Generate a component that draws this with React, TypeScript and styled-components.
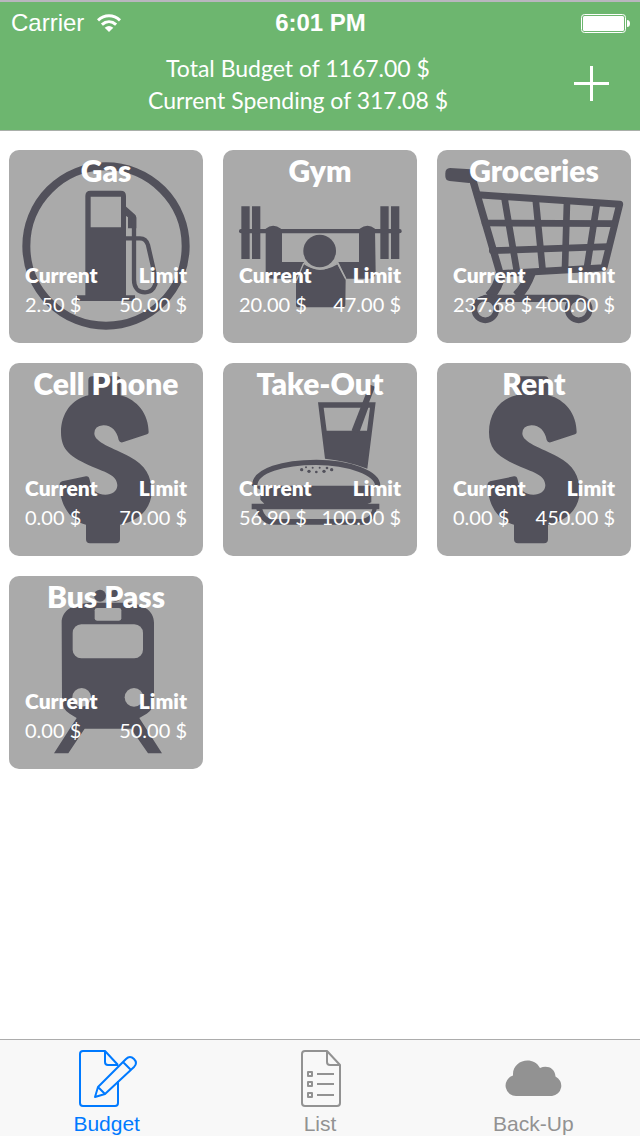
import React from "react";
import styled, { createGlobalStyle } from "styled-components";

const GlobalStyle = createGlobalStyle`
  *, *::before, *::after { box-sizing: border-box; }
  body { margin: 0; background: #fff; }
  button { font: inherit; color: inherit; background: none; border: 0; padding: 0; cursor: pointer; }
`;

const Screen = styled.div`
  display: flex;
  flex-direction: column;
  min-height: 100vh;
  font-family: Lato, "Liberation Sans", sans-serif;
`;

const Header = styled.header`
  background: #6db66f;
  color: #fff;
  border-top: 2px solid #b9b6bf;
  border-bottom: 1px solid #a9afa9;
  padding-bottom: 14px;
`;

const StatusBar = styled.div`
  display: grid;
  grid-template-columns: 1fr auto 1fr;
  align-items: center;
  height: 42px;
  padding: 0 10px 0 11px;
  font: 24px/42px "Liberation Sans", Arial, sans-serif;
`;

const Carrier = styled.span`
  display: flex;
  align-items: center;
  gap: 13px;
`;

const Clock = styled.time`
  font-weight: 700;
`;

const Battery = styled.svg`
  justify-self: end;
`;

const Summary = styled.div`
  display: flex;
  align-items: center;
  padding: 8px 26px 0;
`;

const Totals = styled.div`
  flex: 1;
  text-align: center;
  font-size: 23px;
  font-weight: 400;
  line-height: 32px;
  p { margin: 0; }
`;

const AddButton = styled.button`
  display: grid;
  place-items: center;
  width: 44px;
  height: 44px;
`;

const Grid = styled.ul`
  flex: 1;
  display: grid;
  grid-template-columns: repeat(3, 1fr);
  align-content: start;
  gap: 20px;
  list-style: none;
  margin: 0;
  padding: 19px 9px;
`;

const Tile = styled.li`
  position: relative;
  display: flex;
  flex-direction: column;
  justify-content: space-between;
  aspect-ratio: 194 / 193;
  padding: 0 16px 24px;
  border-radius: 10px;
  background: #aaa;
  color: #fff;
  overflow: hidden;
`;

const TileArt = styled.svg`
  position: absolute;
  inset: 0;
  width: 100%;
  height: 100%;
  color: #52515b;
`;

const TileTitle = styled.h2`
  position: relative;
  margin: 0;
  text-align: center;
  font-size: 30px;
  font-weight: 800;
  line-height: 40px;
  white-space: nowrap;
`;

const Amounts = styled.dl`
  position: relative;
  display: flex;
  justify-content: space-between;
  margin: 0;
  white-space: nowrap;
`;

const Amount = styled.div<{ $end?: boolean }>`
  text-align: ${(p) => (p.$end ? "right" : "left")};
  dt { font-size: 21px; font-weight: 800; line-height: 28px; }
  dd { margin: 0; font-size: 20px; line-height: 30px; }
`;

const TabBar = styled.nav`
  position: sticky;
  bottom: 0;
  display: grid;
  grid-template-columns: repeat(3, 1fr);
  background: #f8f8f8;
  border-top: 1px solid #acacac;
`;

const Tab = styled.a<{ $active?: boolean }>`
  display: flex;
  flex-direction: column;
  align-items: center;
  padding-top: 8px;
  color: ${(p) => (p.$active ? "#007aff" : "#929292")};
  font: 21px/24px "Liberation Sans", Arial, sans-serif;
  text-decoration: none;
  svg { margin-bottom: 4px; }
`;

const GasArt = () => (
  <TileArt viewBox="27 30 582 579" fill="none" stroke="currentColor" aria-hidden="true">
    <circle cx="318" cy="318" r="239" strokeWidth="24" />
    <path d="M256 466V168q0-16 16-16h90q16 0 16 16v298h27v17H231v-17zM272 170v92h91v-92z" fill="currentColor" fillRule="evenodd" stroke="none" />
    <path d="M376 198l28 25q5 4 5 10v32h-25v-33q-8-4-8-12z" fill="currentColor" stroke="none" />
    <path d="M378 295h42q18 0 24 20l22 96c6 27-10 46-31 46s-33-16-33-38V232" strokeWidth="13" />
  </TileArt>
);

const GymArt = () => (
  <TileArt viewBox="30 30 582 579" fill="currentColor" aria-hidden="true">
    <path d="M85 199h25v158H85zM117 199h25v158h-25zM502 199h25v158h-25zM534 199h25v158h-25z" />
    <rect x="78" y="267" width="488" height="13" rx="6" />
    <path d="M158 266q22-18 46 0l3 14v86h66l-21 50h-74q-20 0-20-20zM486 266q-22-18-46 0l-2 14v86h-62l24 50h68q20 0 20-20z" />
    <circle cx="320" cy="333" r="49" />
    <path d="M274 370q46 38 98 0l26 50-1 74q0 8-8 8H257q-8 0-8-8v-74z" />
    <path d="M272 370q45 34 102 0M272 370l-22 52M374 370l24 46" fill="none" stroke="#aaa" strokeWidth="4" />
  </TileArt>
);

const CartArt = () => (
  <TileArt viewBox="30 30 582 579" fill="none" stroke="currentColor" strokeLinecap="round" strokeLinejoin="round" aria-hidden="true">
    <path d="M69 84l62 4q10 1 13 10l7 26-25 5-58-6q-13-2-13-15v-8q0-15 14-16z" fill="currentColor" stroke="none" />
    <path d="M133 105l84 288" strokeWidth="22" />
    <path d="M151 164l427 29-47 190-314 18" strokeWidth="21" />
    <path d="M232 172l38 224M326 178l21 214M420 184l-6 201M510 190l-30 192" strokeWidth="20" />
    <path d="M174 249l387 2M196 332l348-12" strokeWidth="20" />
    <path d="M222 398q-8 46-36 72M311 400q-16 44-42 68" strokeWidth="30" strokeLinecap="butt" />
    <path d="M176 475h276" strokeWidth="22" />
    <circle cx="175" cy="508" r="33" strokeWidth="17" />
    <circle cx="455" cy="508" r="33" strokeWidth="17" />
  </TileArt>
);

const DollarArt = () => (
  <TileArt viewBox="27 30 582 579" fill="currentColor" aria-hidden="true">
    <path d="M265 82q0-12 12-12h73q12 0 12 12v45C412 140 446 184 446 238q0 5-5 6l-73 24q-9 2-12-7C351 232 332 216 310 217q-27 2-27 24c0 28 56 44 106 70 47 24 66 60 66 104 0 50-36 88-95 100v44q0 12-12 12h-78q-12 0-12-12v-44c-46-11-77-56-80-118q0-9 8-12l72-15q9-1 11 10c6 31 22 45 47 45 20 0 36-10 36-28 0-30-34-39-75-56C213 314 183 292 183 238c0-56 32-100 82-111z" />
  </TileArt>
);

const TakeOutArt = () => (
  <TileArt viewBox="30 30 582 579" fill="none" stroke="currentColor" aria-hidden="true">
    <path d="M315 148h173l-25 199q-62-24-127-30zM332 164l9 69h83l27-69zM466 164l-25 69h21l9-69z" fill="currentColor" fillRule="evenodd" stroke="none" />
    <path d="M424 236l54-138" strokeWidth="18" />
    <path d="M125 398c0-46 88-70 185-70s184 32 184 70" strokeWidth="16" />
    <path d="M118 398h381l-24 12v38q-8 4-12 4h36v17h-8q-6 38-36 46H172q-34-8-42-46h-14v-17h38l-12-12v-30zM148 469q8 26 28 29h270q26-3 32-29z" fill="currentColor" fillRule="evenodd" stroke="none" />
    <g fill="currentColor" stroke="none">
      <circle cx="266" cy="350" r="5" /><circle cx="288" cy="355" r="5" /><circle cx="310" cy="357" r="4" />
      <circle cx="333" cy="355" r="5" /><circle cx="356" cy="350" r="5" /><circle cx="279" cy="343" r="3" />
      <circle cx="299" cy="344" r="3" /><circle cx="320" cy="344" r="3" /><circle cx="342" cy="345" r="4" />
    </g>
  </TileArt>
);

const TrainArt = () => (
  <TileArt viewBox="27 30 582 579" fill="currentColor" aria-hidden="true">
    <circle cx="300" cy="89" r="18" />
    <circle cx="346" cy="89" r="18" />
    <path d="M185 170c0-38 37-60 97-60h84c60 0 96 22 96 60v231q0 28-22 42l-22 13 68 106h-42l-51-74H254l-49 74h-43l68-106-21-13q-23-14-23-42z" />
    <g fill="#aaa">
      <rect x="284" y="126" width="80" height="38" rx="7" />
      <rect x="218" y="175" width="211" height="102" rx="26" />
      <circle cx="245" cy="394" r="28" />
      <circle cx="402" cy="394" r="28" />
    </g>
  </TileArt>
);

const budgets = [
  { name: "Gas", current: "2.50 $", limit: "50.00 $", Art: GasArt },
  { name: "Gym", current: "20.00 $", limit: "47.00 $", Art: GymArt },
  { name: "Groceries", current: "237.68 $", limit: "400.00 $", Art: CartArt },
  { name: "Cell Phone", current: "0.00 $", limit: "70.00 $", Art: DollarArt },
  { name: "Take-Out", current: "56.90 $", limit: "100.00 $", Art: TakeOutArt },
  { name: "Rent", current: "0.00 $", limit: "450.00 $", Art: DollarArt },
  { name: "Bus Pass", current: "0.00 $", limit: "50.00 $", Art: TrainArt },
];

export default function App() {
  return (
    <Screen>
      <GlobalStyle />
      <Header>
        <StatusBar>
          <Carrier>
            Carrier
            <svg width="24" height="18" viewBox="0 0 24 18" fill="none" stroke="#fff" strokeWidth="3" aria-label="Wi-Fi">
              <path d="M1 6.3C7.500 .2 16.500 .2 23 6.300M4.900 10.600c4.300-3.900 9.900-3.900 14.200 0" />
              <path d="M7.700 13.700q4.300-3.600 8.600 0L12 18z" fill="#fff" stroke="none" />
            </svg>
          </Carrier>
          <Clock>6:01 PM</Clock>
          <Battery width="49" height="19" viewBox="0 0 49 19" aria-label="Battery full">
            <rect x=".5" y=".5" width="44" height="18" rx="3" fill="none" stroke="#fff" />
            <rect x="2" y="2" width="41" height="15" rx="1.500" fill="#fff" />
            <path d="M46 6q3 0 3 3.500T46 13z" fill="#fff" />
          </Battery>
        </StatusBar>
        <Summary>
          <Totals>
            <p>Total Budget of 1167.00 $</p>
            <p>Current Spending of 317.08 $</p>
          </Totals>
          <AddButton type="button" aria-label="Add budget">
            <svg width="36" height="36" viewBox="0 0 36 36" stroke="#fff" strokeWidth="3">
              <path d="M17.500 0v35M0 17.500h35" />
            </svg>
          </AddButton>
        </Summary>
      </Header>

      <Grid>
        {budgets.map(({ name, current, limit, Art }) => (
          <Tile key={name}>
            <Art />
            <TileTitle>{name}</TileTitle>
            <Amounts>
              <Amount>
                <dt>Current</dt>
                <dd>{current}</dd>
              </Amount>
              <Amount $end>
                <dt>Limit</dt>
                <dd>{limit}</dd>
              </Amount>
            </Amounts>
          </Tile>
        ))}
      </Grid>

      <TabBar>
        <Tab href="#budget" $active aria-current="page">
          <svg width="60" height="60" viewBox="0 0 60 60" fill="none" stroke="currentColor" strokeWidth="2" strokeLinejoin="round">
            <path d="M41 17L28 3H6Q3 3 3 6v49q0 3 3 3h32q3 0 3-3V33M28 3v11q0 3 3 3h10" />
            <path d="M18 49l3-10 28-28q4-4 8 0t0 8L28 46zM21 39l7 7M46 14l8 8" />
          </svg>
          Budget
        </Tab>
        <Tab href="#list">
          <svg width="60" height="60" viewBox="0 0 60 60" fill="none" stroke="currentColor" strokeWidth="2" strokeLinejoin="round">
            <path d="M37 3H15q-3 0-3 3v49q0 3 3 3h32q3 0 3-3V17zM37 3v11q0 3 3 3h10" />
            <path d="M18 24h4v4h-4zM18 34h4v4h-4zM18 45h4v4h-4zM27 26h17M27 36h17M27 47h17" />
          </svg>
          List
        </Tab>
        <Tab href="#backup">
          <svg width="60" height="60" viewBox="0 0 60 60" fill="currentColor">
            <path d="M14 48a10.500 10.500 0 0 1-4-20.500C9 12 30 7 37 20c7-3 15 0 15.500 8.500A10.300 10.300 0 0 1 49 48z" />
          </svg>
          Back-Up
        </Tab>
      </TabBar>
    </Screen>
  );
}
